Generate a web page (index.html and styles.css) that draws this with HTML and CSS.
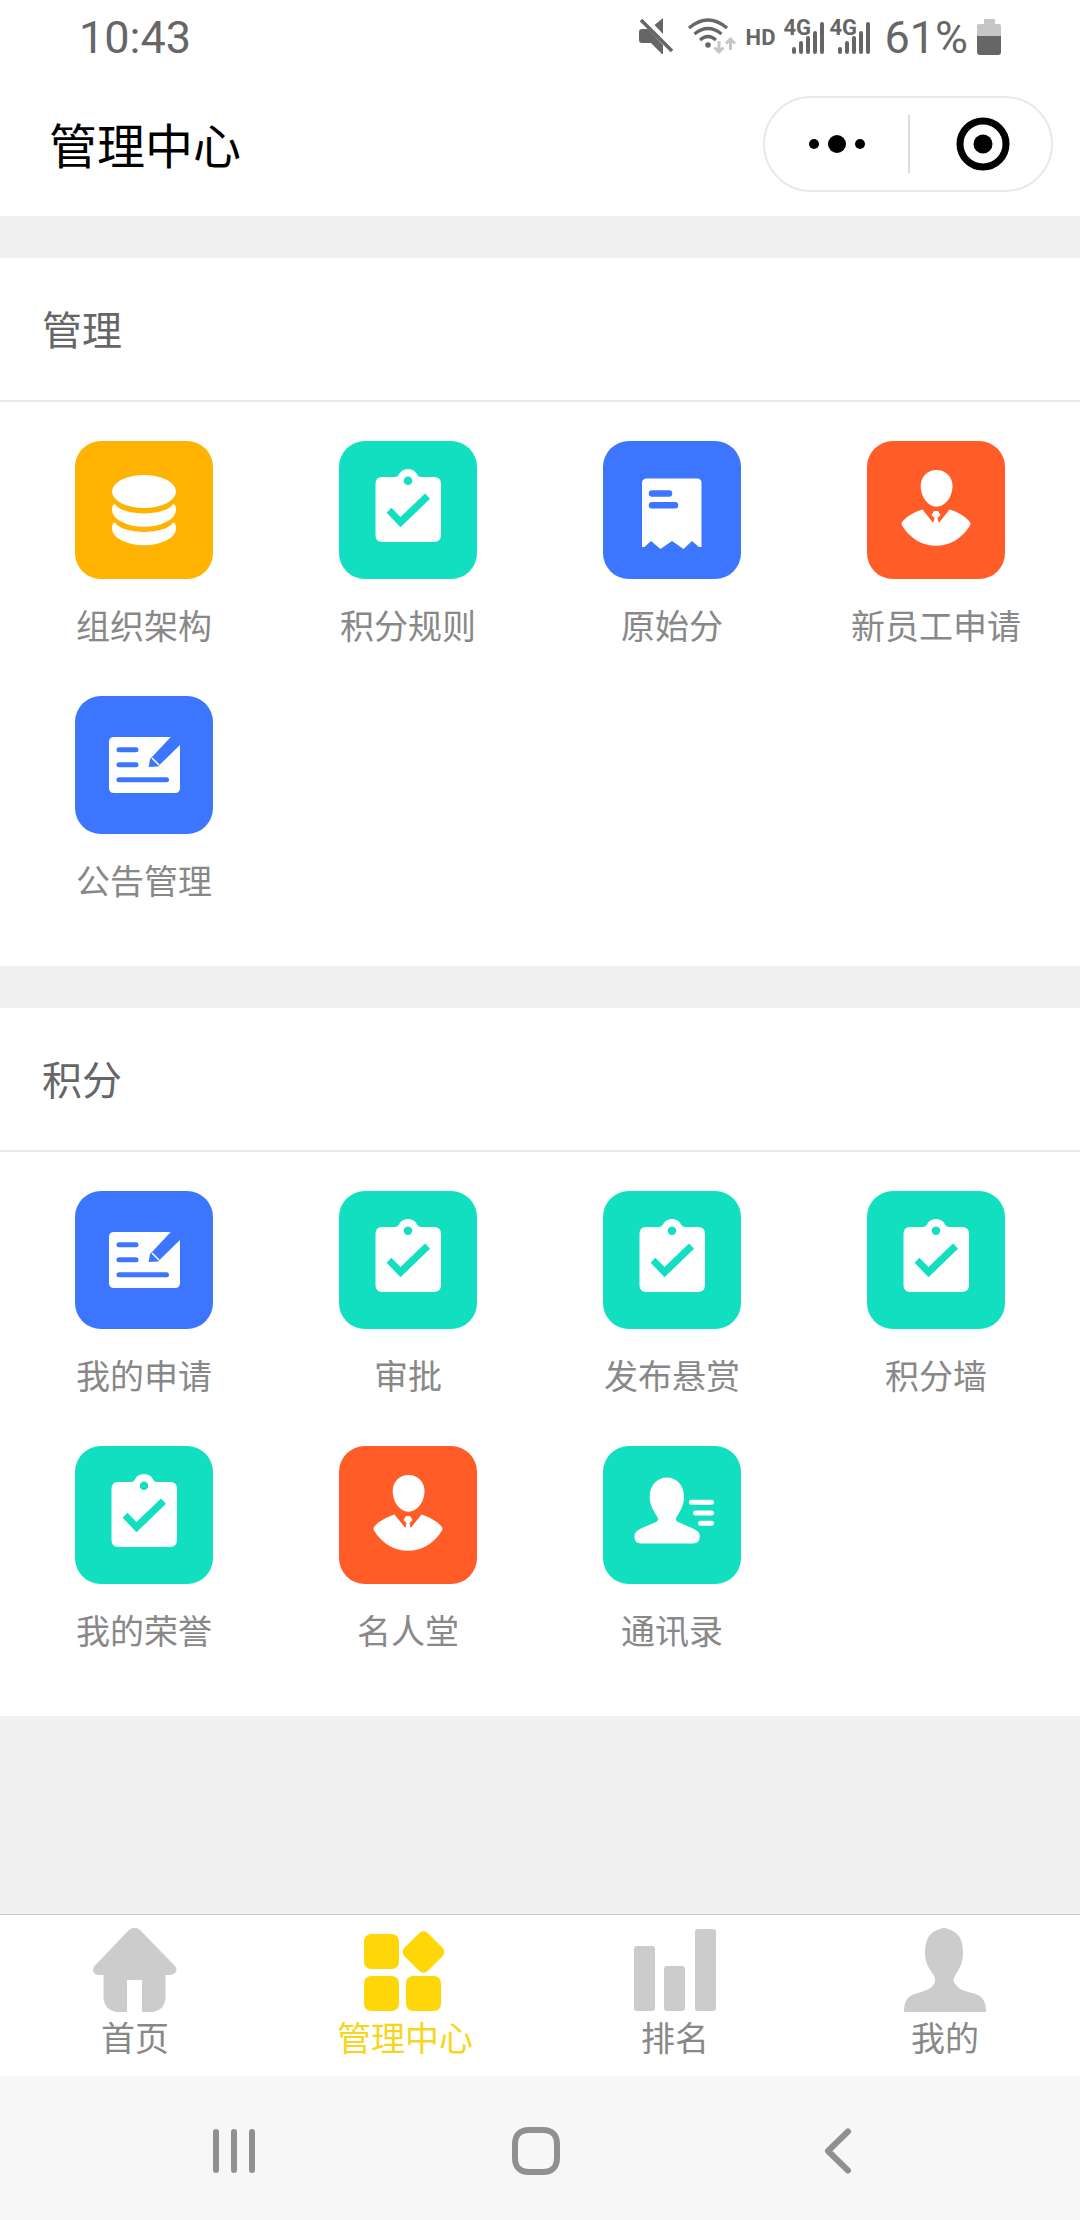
FILE: index.html
```html
<!DOCTYPE html>
<html lang="zh-CN">
<head>
<meta charset="utf-8">
<meta name="viewport" content="width=device-width, initial-scale=1">
<title>管理中心</title>
<link rel="stylesheet" href="styles.css">
</head>
<body>
<svg class="sprite" aria-hidden="true">
  <symbol id="i-data" viewBox="0 0 138 138">
    <ellipse cx="69" cy="50.500" rx="32" ry="16.500"/>
    <path d="M37 69Q37 63 40 63C47 75.500 91 75.500 98 63Q101 63 101 69A32 16.700 0 0 1 37 69Z"/>
    <path d="M37 87.500Q37 81.500 40 81.500C47 94 91 94 98 81.500Q101 81.500 101 87.500A32 16.700 0 0 1 37 87.500Z"/>
  </symbol>
  <symbol id="i-check" viewBox="0 0 138 138">
    <path fill-rule="evenodd" d="M43 36H56Q58.500 36 59.500 34A10.500 10.500 0 0 1 78.500 34Q79.500 36 82 36H95Q102 36 102 43V94Q102 101 95 101H43Q36.500 101 36.500 94V43Q36.500 36 43 36ZM69 35.500A4.200 4.200 0 1 0 69 44A4.200 4.200 0 1 0 69 35.500ZM47.700 71.700L61.500 86.300L91 57.700L86 52.500L61.500 76L52.300 66.700Z"/>
  </symbol>
  <symbol id="i-receipt" viewBox="0 0 138 138">
    <path d="M44 37.500H94Q98.500 37.500 98.500 42V106H96L89 100L80.500 108L69 100L57.500 108L48 100L41.500 106H39V42Q39 37.500 44 37.500Z"/>
    <path class="tile-line" stroke-width="6.500" d="M49 52.500H66M49 64.300H72"/>
  </symbol>
  <symbol id="i-staff" viewBox="0 0 138 138">
    <path d="M69.500 29C79 29 85.500 36 85.500 45C85.500 56 78 65.700 69.500 65.700C61 65.700 53.700 56 53.700 45C53.700 36 60 29 69.500 29Z"/>
    <path d="M55.500 68.500C47 71 39 76 35 81Q34 82.700 35 84.500C51 111.500 87 111.500 103 84.500Q104 82.700 103 81C99 76 91 71 82.500 68.500L71.700 82L70.500 77L73.500 74L71 70H67L64.500 74L67.500 77L66.300 82Z"/>
  </symbol>
  <symbol id="i-note" viewBox="0 0 138 138">
    <path d="M39 41H95.700L77.500 60.500L75 63L73.700 71L83 70.500L85.500 68L105 49V92Q105 97 100 97H39Q34 97 34 92V46Q34 41 39 41Z"/>
    <path stroke="#fff" stroke-width="1.500" d="M77 62L84 69"/>
    <path class="tile-line" stroke-width="5" d="M44 53.700H61M44 68.700H61M44 83.700H91.500"/>
  </symbol>
  <symbol id="i-contact" viewBox="0 0 138 138">
    <path d="M64 31.500C74 31.500 81 39.500 81 51C81 61 75.500 67 72.700 73Q73 75 75 76L89 82Q96.700 85 96.700 90V91Q96.700 97.500 90 97.500H38Q31.500 97.500 31.500 91V90Q31.500 85 39 82L53 76Q55 75 55.300 73C52.500 67 46.700 61 46.700 51C46.700 39.500 54 31.500 64 31.500Z"/>
    <path stroke="#fff" stroke-width="5" stroke-linecap="round" d="M88.500 56.300H108.500M92.500 67H108.500M97.500 77.300H108.500"/>
  </symbol>
</svg>

<div class="app">
  <header class="top">
    <div class="status">
      <span class="clock">10:43</span>
      <div class="indicators">
        <svg class="mute" viewBox="0 0 34 38" aria-hidden="true">
          <path d="M3 11H9L24 27V36H23L12 25H3Q0 25 0 22V14Q0 11 3 11ZM24 0V16L15.500 7Z"/>
          <path class="stroke" stroke-width="3.500" d="M2 2L33 33"/>
        </svg>
        <svg class="wifi" viewBox="0 0 48 38" aria-hidden="true">
          <path class="stroke" stroke-width="3.200" d="M1 10Q20 -6 39 10M6.500 16Q20 5 33.500 16M12 22Q20 15 28 22"/>
          <circle cx="20" cy="27" r="2.800"/>
          <path class="faint" stroke-width="3" d="M31 23V34M26.500 29.500L31 34L35.500 29.500M42.500 32V21M38 25.500L42.500 21L47 25.500"/>
        </svg>
        <span class="hd">HD</span>
        <div class="signals">
          <div class="signal">
            <span>4G</span>
            <svg viewBox="0 0 41 38" aria-hidden="true"><path class="stroke round" stroke-width="4" d="M11 31V34M18 25V34M25 20V34M32 15V34M39 6V34"/></svg>
          </div>
          <div class="signal">
            <span>4G</span>
            <svg viewBox="0 0 41 38" aria-hidden="true"><path class="stroke round" stroke-width="4" d="M11 31V34M18 25V34M25 20V34M32 15V34M39 6V34"/></svg>
          </div>
        </div>
        <span class="percent">61%</span>
        <svg class="battery" viewBox="0 0 24 38" aria-hidden="true">
          <path class="battery-empty" d="M7 1H18V6H22Q24 6 24 8V18H0V8Q0 6 2 6H7Z"/>
          <path d="M0 18H24V34Q24 37 21 37H3Q0 37 0 34Z"/>
        </svg>
      </div>
    </div>
    <div class="titlebar">
      <h1>管理中心</h1>
      <div class="capsule">
        <button type="button" aria-label="更多">
          <svg width="58" height="20" viewBox="0 0 58 20"><circle cx="6" cy="10" r="5"/><circle cx="29" cy="10" r="9"/><circle cx="52" cy="10" r="5"/></svg>
        </button>
        <button type="button" aria-label="关闭">
          <svg width="54" height="54" viewBox="0 0 54 54"><circle cx="27" cy="27" r="23" fill="none" stroke="#000" stroke-width="7"/><circle cx="27" cy="27" r="9.500"/></svg>
        </button>
      </div>
    </div>
  </header>

  <main>
    <section>
      <h2>管理</h2>
      <nav class="grid" aria-label="管理">
        <a href="#"><svg class="tile orange"><use href="#i-data"/></svg><span>组织架构</span></a>
        <a href="#"><svg class="tile teal"><use href="#i-check"/></svg><span>积分规则</span></a>
        <a href="#"><svg class="tile blue"><use href="#i-receipt"/></svg><span>原始分</span></a>
        <a href="#"><svg class="tile red"><use href="#i-staff"/></svg><span>新员工申请</span></a>
        <a href="#"><svg class="tile blue"><use href="#i-note"/></svg><span>公告管理</span></a>
      </nav>
    </section>
    <section>
      <h2>积分</h2>
      <nav class="grid" aria-label="积分">
        <a href="#"><svg class="tile blue"><use href="#i-note"/></svg><span>我的申请</span></a>
        <a href="#"><svg class="tile teal"><use href="#i-check"/></svg><span>审批</span></a>
        <a href="#"><svg class="tile teal"><use href="#i-check"/></svg><span>发布悬赏</span></a>
        <a href="#"><svg class="tile teal"><use href="#i-check"/></svg><span>积分墙</span></a>
        <a href="#"><svg class="tile teal"><use href="#i-check"/></svg><span>我的荣誉</span></a>
        <a href="#"><svg class="tile red"><use href="#i-staff"/></svg><span>名人堂</span></a>
        <a href="#"><svg class="tile teal"><use href="#i-contact"/></svg><span>通讯录</span></a>
      </nav>
    </section>
  </main>

  <nav class="tabs" aria-label="主导航">
    <a href="#">
      <svg viewBox="0 0 84 84"><path d="M36 2Q41.500 -2.500 47 2L82 38Q85 42 82 45Q80 47 77 47H72.500V71Q71 82 60 84H49V52H34V84H23Q12 82 10.500 71V47H6Q3 47 1 45Q-1 42 1.500 38Z"/></svg>
      <span>首页</span>
    </a>
    <a href="#" class="active" aria-current="page">
      <svg viewBox="0 0 84 84"><rect x="1" y="6" width="35" height="35" rx="7"/><rect x="1" y="48" width="35" height="35" rx="7"/><rect x="43" y="48" width="35" height="35" rx="7"/><rect x="44" y="7.500" width="33" height="33" rx="6" transform="rotate(45 60.500 24)"/></svg>
      <span>管理中心</span>
    </a>
    <a href="#">
      <svg viewBox="0 0 84 84"><rect x="1" y="18" width="21" height="65" rx="3"/><rect x="31" y="38" width="21" height="45" rx="3"/><rect x="62" y="1" width="21" height="82" rx="3"/></svg>
      <span>排名</span>
    </a>
    <a href="#">
      <svg viewBox="0 0 84 84"><path d="M37 1Q41 -1 45 1C56 4 60 12 60 25C60 38 54 43 51.500 49Q50 51 51 54C55 62 62 63 69 65C80 67 83 74 83 84H1C1 74 4 67 15 65C22 63 28 61 31 56Q33 53 31.500 49C29 43 22 38 22 25C22 12 26 4 37 1Z"/></svg>
      <span>我的</span>
    </a>
  </nav>

  <footer class="system">
    <button type="button" aria-label="最近任务"><svg width="48" height="48" viewBox="0 0 48 48"><path stroke-linecap="round" d="M6 5V43M24 5V43M42 5V43"/></svg></button>
    <button type="button" aria-label="主屏幕"><svg width="48" height="48" viewBox="0 0 48 48"><path d="M17 3H31C40 3 45 8 45 17V31C45 40 40 45 31 45H17C8 45 3 40 3 31V17C3 8 8 3 17 3Z"/></svg></button>
    <button type="button" aria-label="返回"><svg width="48" height="48" viewBox="0 0 48 48"><path stroke-linecap="round" stroke-linejoin="round" d="M34 4.500L14 24L34 43.500"/></svg></button>
  </footer>
</div>
</body>
</html>
```
FILE: styles.css
```css
* {
  box-sizing: border-box;
}

body {
  margin: 0;
  background: #f0f0f0;
  font-family: "Noto Sans CJK SC", "Noto Sans", sans-serif;
  font-size: 34px;
  color: #888;
}

h1,
h2 {
  margin: 0;
  font-weight: 400;
}

a {
  color: inherit;
  text-decoration: none;
}

button {
  display: flex;
  align-items: center;
  justify-content: center;
  padding: 0;
  border: 0;
  background: none;
}

svg {
  display: block;
}

.sprite {
  display: none;
}

.app {
  display: flex;
  flex-direction: column;
  min-height: 100vh;
}

/* Status bar */
.top {
  background: #fff;
}

.status {
  display: flex;
  align-items: center;
  justify-content: space-between;
  height: 72px;
  padding: 2px 79px 0;
  font-family: Roboto, sans-serif;
  font-size: 45px;
  color: #666;
}

.indicators {
  display: flex;
  align-items: center;
  fill: #666;
}

.indicators svg {
  height: 38px;
}

.stroke {
  fill: none;
  stroke: #666;
}

.round {
  stroke-linecap: round;
}

.faint {
  fill: none;
  stroke: #c6c6c6;
}

.mute {
  width: 34px;
  margin-right: 15px;
}

.wifi {
  width: 48px;
  margin-right: 10px;
}

.hd {
  margin-right: 8px;
  font-size: 22px;
  font-weight: 700;
}

.signals {
  display: flex;
  gap: 5px;
  margin-right: 14px;
}

.signal {
  position: relative;
  width: 41px;
}

/* Network type sits over the shorter signal bars */
.signal span {
  position: absolute;
  top: 0;
  left: 0;
  font-size: 22px;
  font-weight: 700;
  line-height: 20px;
}

.percent {
  margin-right: 9px;
}

.battery {
  width: 24px;
}

.battery-empty {
  fill: #c6c6c6;
}

/* Title bar */
.titlebar {
  display: flex;
  align-items: center;
  justify-content: space-between;
  height: 144px;
  padding: 0 27px 0 49px;
}

h1 {
  padding-bottom: 2px;
  font-size: 48px;
  line-height: 72px;
  color: #000;
}

.capsule {
  display: grid;
  grid-template-columns: 1fr 1fr;
  align-items: center;
  width: 290px;
  height: 96px;
  border: 2px solid #e8e8e8;
  border-radius: 48px;
}

.capsule button {
  height: 58px;
}

.capsule button + button {
  padding-left: 4px;
  border-left: 2px solid #dcdcdc;
}

/* Sections */
main {
  display: flex;
  flex: 1;
  flex-direction: column;
  gap: 42px;
  padding: 42px 0;
}

section {
  background: #fff;
}

h2 {
  padding: 41px 42px 43px;
  border-bottom: 2px solid #e8e8e8;
  font-size: 40px;
  line-height: 58px;
  color: #666;
}

.grid {
  display: grid;
  grid-template-columns: repeat(4, 1fr);
  padding: 0 12px 54px;
}

.grid a {
  display: flex;
  flex-direction: column;
  align-items: center;
  gap: 22px;
  padding: 39px 0 8px;
  line-height: 48px;
}

.tile {
  width: 138px;
  height: 138px;
  border-radius: 26px;
  fill: #fff;
}

.tile-line {
  stroke: #3c76ff;
  stroke-linecap: round;
}

.orange {
  background: #ffb300;
}

.teal {
  background: #12dfc0;
}

.blue {
  background: #3c76ff;
}

.red {
  background: #ff5c28;
}

/* Tab bar */
.tabs {
  display: grid;
  grid-template-columns: repeat(4, 1fr);
  border-top: 1px solid #c8c8c8;
  background: #fff;
}

.tabs a {
  display: flex;
  flex-direction: column;
  align-items: center;
  gap: 1px;
  padding: 13px 0 15px;
  line-height: 48px;
}

.tabs svg {
  width: 84px;
  height: 84px;
  fill: #ccc;
}

.tabs .active {
  color: #f8d51c;
}

.tabs .active svg {
  fill: #ffd708;
}

/* System navigation */
.system {
  display: grid;
  grid-template-columns: repeat(3, 1fr);
  height: 144px;
  padding: 6px 91px 0 83px;
  background: #f7f7f7;
}

.system svg {
  fill: none;
  stroke: #909090;
  stroke-width: 6px;
}
```
